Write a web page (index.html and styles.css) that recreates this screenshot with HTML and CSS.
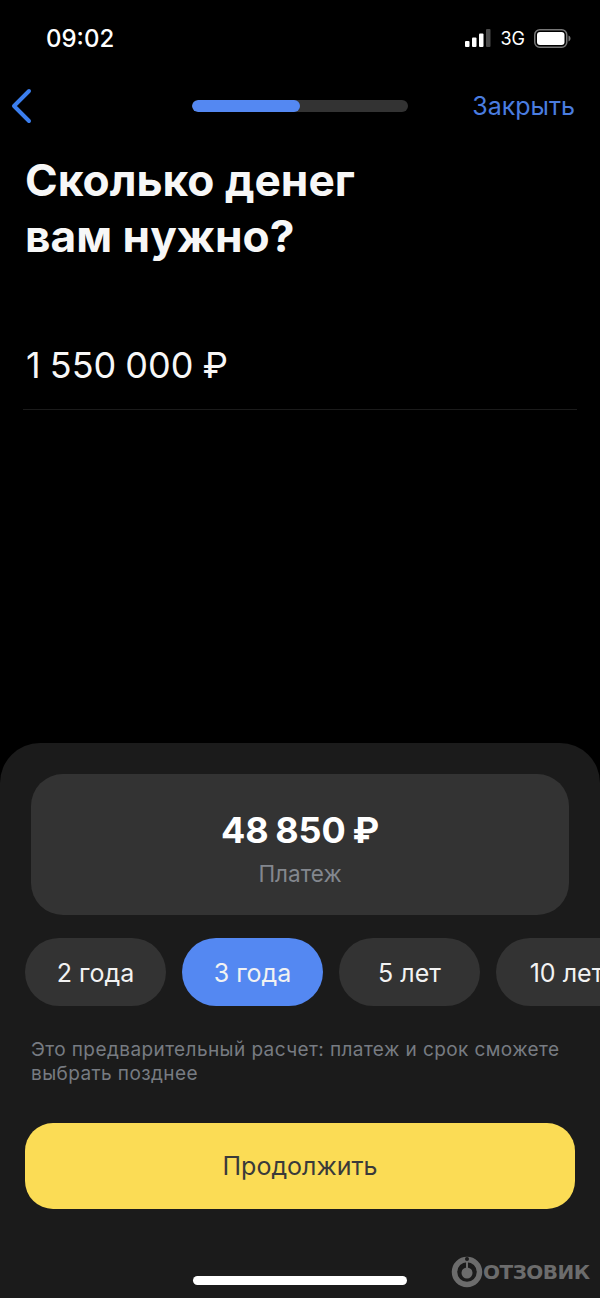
FILE: index.html
```html
<!DOCTYPE html>
<html lang="ru">

<head>
    <meta charset="UTF-8">
    <meta name="viewport" content="width=device-width, initial-scale=1.0">
    <title>Сколько денег вам нужно?</title>
    <link rel="stylesheet" href="styles.css">
</head>

<body>
    <div class="screen">
        <div class="status-bar">
            <span class="status-time">09:02</span>
            <div class="status-icons">
                <svg class="signal-icon" width="26" height="18" viewBox="0 0 26 18">
                    <rect x="0" y="12" width="4.5" height="6" rx="1" fill="#fff"/>
                    <rect x="7" y="8.5" width="4.5" height="9.5" rx="1" fill="#fff"/>
                    <rect x="14" y="4.5" width="4.5" height="13.5" rx="1" fill="#fff"/>
                    <rect x="21" y="0" width="4.5" height="18" rx="1" fill="#4a4a4a"/>
                </svg>
                <span class="status-network">3G</span>
                <svg class="battery-icon" width="37" height="19" viewBox="0 0 37 19">
                    <rect x="0.75" y="0.75" width="32" height="17.5" rx="5" fill="none" stroke="#777" stroke-width="1.5"/>
                    <rect x="3" y="3" width="27.5" height="13" rx="3" fill="#fff"/>
                    <path d="M34.5 6.5c1.2.4 2 1.6 2 3s-.8 2.6-2 3z" fill="#777"/>
                </svg>
            </div>
        </div>

        <div class="nav-bar">
            <svg class="back-icon" width="22" height="36" viewBox="0 0 22 36">
                <path d="M19 3L4 18l15 15" fill="none" stroke="#3b7eee" stroke-width="4" stroke-linecap="round" stroke-linejoin="round"/>
            </svg>
            <div class="progress">
                <div class="progress-fill"></div>
            </div>
            <span class="nav-close">Закрыть</span>
        </div>

        <h1 class="title">Сколько денег<br>вам нужно?</h1>

        <div class="amount-field">1 550 000 ₽</div>

        <div class="sheet">
            <div class="payment-card">
                <div class="payment-value">48 850 ₽</div>
                <div class="payment-label">Платеж</div>
            </div>

            <div class="terms">
                <div class="term">2 года</div>
                <div class="term term-active">3 года</div>
                <div class="term">5 лет</div>
                <div class="term">10 лет</div>
            </div>

            <p class="note">Это предварительный расчет: платеж и срок сможете выбрать позднее</p>

            <button class="continue-button">Продолжить</button>

            <div class="home-indicator"></div>
        </div>

        <div class="watermark">
            <svg width="32" height="32" viewBox="0 0 32 32">
                <circle cx="16" cy="16" r="12.5" fill="none" stroke="#6c6c6c" stroke-width="5.5"/>
                <circle cx="16" cy="17" r="5.5" fill="#6c6c6c"/>
                <rect x="15" y="5" width="2" height="8" fill="#6c6c6c"/>
                <circle cx="16" cy="3" r="2" fill="#1b1b1b"/>
            </svg>
            <span class="watermark-text">ОТЗОВИК</span>
        </div>
    </div>
</body>

</html>
```

FILE: styles.css
```css
* {
    box-sizing: border-box;
}

html,
body {
    margin: 0;
    padding: 0;
    background-color: #000;
}

body {
    font-family: Inter, "Noto Sans", sans-serif;
    color: #fff;
}

.screen {
    position: relative;
    display: flex;
    flex-direction: column;
    width: 600px;
    height: 1298px;
    overflow: hidden;
    background-color: #000;
}

.status-bar {
    display: flex;
    align-items: center;
    justify-content: space-between;
    height: 76px;
    padding: 0 29px 0 46px;
}

.status-time {
    font-size: 24px;
    font-weight: 500;
}

.status-icons {
    display: flex;
    align-items: center;
    gap: 9px;
}

.status-network {
    font-size: 18px;
    color: #fff;
}

.nav-bar {
    display: flex;
    align-items: center;
    justify-content: space-between;
    position: relative;
    height: 60px;
    padding: 0 25px 0 10px;
}

.progress {
    position: absolute;
    top: 24px;
    left: 192px;
    width: 216px;
    height: 12px;
    border-radius: 6px;
    background-color: #333;
    overflow: hidden;
}

.progress-fill {
    width: 50%;
    height: 100%;
    border-radius: 6px;
    background-color: #5488f2;
}

.nav-close {
    font-size: 25px;
    color: #4a7de0;
}

.title {
    margin: 16px 0 0;
    padding: 0 25px;
    font-size: 44.25px;
    font-weight: 700;
    line-height: 56px;
    color: #f7f7f7;
}

.amount-field {
    margin: 79px 23px 0;
    padding: 0 0 22px 3px;
    border-bottom: 1px solid #1b1b1b;
    font-size: 36px;
    line-height: 44px;
    word-spacing: -1px;
    color: #f7f7f7;
}

.sheet {
    display: flex;
    flex-direction: column;
    margin-top: auto;
    height: 555px;
    padding-top: 31px;
    border-radius: 40px 40px 0 0;
    background-color: #1b1b1b;
}

.payment-card {
    display: flex;
    flex-direction: column;
    align-items: center;
    height: 141px;
    margin: 0 31px;
    padding-top: 31px;
    border-radius: 32px;
    background-color: #333;
}

.payment-value {
    font-size: 36px;
    font-weight: 700;
    line-height: 50px;
    word-spacing: -2px;
}

.payment-label {
    margin-top: 4px;
    font-size: 22.5px;
    line-height: 30px;
    color: #83878e;
}

.terms {
    display: flex;
    gap: 16px;
    margin-top: 23px;
    padding-left: 25px;
}

.term {
    display: flex;
    align-items: center;
    justify-content: center;
    flex: 0 0 141px;
    height: 68px;
    padding-top: 1px;
    border-radius: 34px;
    background-color: #333;
    font-size: 25px;
    color: #f2f2f2;
}

.term-active {
    background-color: #5488f2;
}

.note {
    margin: 32px 31px 0;
    font-size: 19px;
    line-height: 24px;
    letter-spacing: 0.41px;
    color: #777b82;
}

.continue-button {
    display: block;
    height: 86px;
    margin: 37px 25px 0;
    border: none;
    border-radius: 28px;
    background-color: #fbdc55;
    font-family: inherit;
    font-size: 25px;
    color: #3a3a3a;
}

.home-indicator {
    width: 214px;
    height: 9px;
    margin: 67px auto 0;
    border-radius: 5px;
    background-color: #fff;
}

.watermark {
    position: absolute;
    left: 451px;
    top: 1256px;
    display: flex;
    align-items: center;
    color: #6c6c6c;
}

.watermark-text {
    font-family: "DejaVu Sans", sans-serif;
    font-size: 20px;
    font-weight: 700;
    letter-spacing: -0.5px;
}
```
